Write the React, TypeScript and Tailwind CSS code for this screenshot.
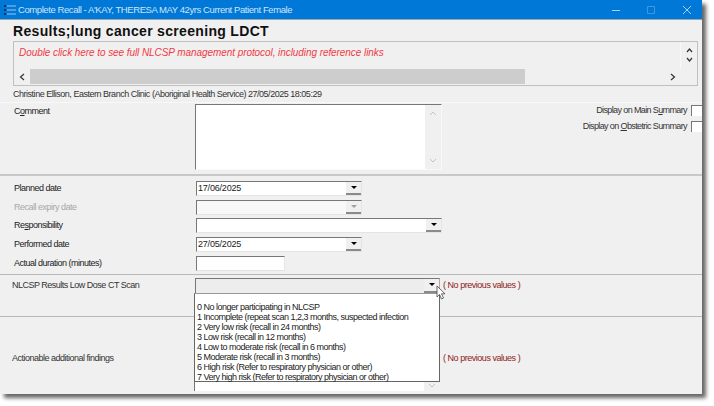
const labelFont = "font-['Liberation_Sans',sans-serif]";

function Arrow({ disabled }: { disabled?: boolean }) {
  return (
    <div className="flex h-full w-[15px] shrink-0 items-center justify-center border-b-2 border-[#8a8a8a] bg-[#f0f0f0]">
      <svg width="6" height="3" viewBox="0 0 6 3">
        <path d="M0 0h6L3 3z" fill={disabled ? "#a0a0a0" : "#000"} />
      </svg>
    </div>
  );
}

function FieldBox({
  value,
  arrow,
  disabled,
  width = "w-[166px]",
}: {
  value?: string;
  arrow?: boolean;
  disabled?: boolean;
  width?: string;
}) {
  return (
    <div
      className={`flex h-[15px] ${width} items-center border border-b-[#e4e4e4] border-l-[#777] border-r-[#e4e4e4] border-t-[#777] ${disabled ? "bg-[#f8f8f8]" : "bg-white"}`}
    >
      <div className="flex-1 pl-[1px] text-[9px] leading-none tracking-[-0.2px] text-[#222]">{value}</div>
      {arrow && <Arrow disabled={disabled} />}
    </div>
  );
}

function Row({
  label,
  muted,
  children,
}: {
  label: React.ReactNode;
  muted?: boolean;
  children: React.ReactNode;
}) {
  return (
    <div className="flex h-[15px] items-center">
      <div className={`w-[182px] text-[9px] leading-none tracking-[-0.5px] ${muted ? "text-[#a8a8a8]" : "text-[#222]"}`}>
        {label}
      </div>
      {children}
    </div>
  );
}

function Check({ label }: { label: React.ReactNode }) {
  return (
    <div className="flex h-[15px] items-center justify-end gap-[4px]">
      <span className="text-[9px] leading-none tracking-[-0.62px] text-[#333]">{label}</span>
      <div className="h-[11px] w-[11px] border-l border-t border-[#777] bg-white" />
    </div>
  );
}

const options = [
  "0 No longer participating in NLCSP",
  "1 Incomplete (repeat scan 1,2,3 months, suspected infection",
  "2 Very low risk (recall in 24 months)",
  "3 Low risk (recall in 12 months)",
  "4 Low to moderate risk (recall in 6 months)",
  "5 Moderate risk (recall in 3 months)",
  "6 High risk (Refer to respiratory physician or other)",
  "7 Very high risk (Refer to respiratory physician or other)",
];

export default function App() {
  return (
    <div className={`h-[406px] w-[714px] overflow-hidden bg-white ${labelFont}`}>
      <div className="relative flex h-[394px] w-[702px] flex-col bg-[#f0f0f0] shadow-[4px_4px_4px_#666]">
        {/* title bar */}
        <div className="flex h-[20px] shrink-0 items-center border-b border-[#9aa5ad] bg-[#0078d7] pl-[3px]">
          <svg width="13" height="12" viewBox="0 0 13 12" className="mr-[2px]">
            <path d="M1 2h2M1 6h2M1 10h2" stroke="#10203a" strokeWidth="1.5" />
            <path d="M4 2h9M4 6h9M4 10h9" stroke="#9cc4e8" strokeWidth="1" />
          </svg>
          <span className="flex-1 text-[9.5px] leading-none tracking-[-0.42px] text-[#cfe5f7]">
            Complete Recall - A'KAY, THERESA MAY 42yrs Current Patient Female
          </span>
          <svg width="80" height="12" viewBox="0 0 80 12" className="mr-[10px] text-[#a9d0ef]">
            <path d="M0 6.5h8" stroke="currentColor" />
            <path d="M35.5 2.5h7v7h-7z" stroke="#3f97dd" fill="none" />
            <path d="M71 2l8 8M79 2l-8 8" stroke="currentColor" />
          </svg>
        </div>

        {/* heading */}
        <div className="flex h-[21px] shrink-0 items-center pl-[13px] text-[14px] font-bold leading-none tracking-[0.32px] text-[#111]">
          Results;lung cancer screening LDCT
        </div>

        {/* protocol box */}
        <div className="ml-[13px] mr-[4px] flex h-[45px] shrink-0 flex-col border border-[#c0c0c0]">
          <div className="flex h-[27px] shrink-0">
            <div className="flex-1 pl-[5px] pt-[6px] text-[10px] italic leading-none tracking-[-0.07px] text-[#f03a44]">
              Double click here to see full NLCSP management protocol, including reference links
            </div>
            <div className="flex w-[17px] flex-col items-center gap-[4px] border-l border-[#f8f8f8] pt-[6px]">
              <svg width="7" height="5" viewBox="0 0 7 5">
                <path d="M1 4l2.5-3L6 4" stroke="#333" fill="none" strokeWidth="1.2" />
              </svg>
              <svg width="7" height="5" viewBox="0 0 7 5">
                <path d="M1 1l2.5 3L6 1" stroke="#333" fill="none" strokeWidth="1.2" />
              </svg>
            </div>
          </div>
          <div className="flex h-[15px] shrink-0 items-center">
            <div className="flex w-[16px] justify-center">
              <svg width="6" height="8" viewBox="0 0 6 8">
                <path d="M5 1L1.5 4 5 7" stroke="#333" fill="none" strokeWidth="1.2" />
              </svg>
            </div>
            <div className="h-full w-[495px] bg-[#cdcdcd]" />
            <div className="flex flex-1 justify-end pr-[21px]">
              <svg width="6" height="8" viewBox="0 0 6 8">
                <path d="M1 1l3.5 3L1 7" stroke="#333" fill="none" strokeWidth="1.2" />
              </svg>
            </div>
          </div>
        </div>

        {/* author line */}
        <div className="flex h-[16px] shrink-0 items-center pl-[13px] text-[9px] leading-none tracking-[-0.48px] text-[#333]">
          Christine Ellison, Eastern Branch Clinic (Aboriginal Health Service) 27/05/2025 18:05:29
        </div>

        {/* comment */}
        <div className="flex h-[74px] shrink-0 border-b-2 border-t border-b-[#c8c8c8] border-t-[#f8f8f8] pt-[1px]">
          <div className="w-[195px] pl-[14px] pt-[3px] text-[9px] leading-none tracking-[-0.5px] text-[#222]">
            C<span className="underline">o</span>mment
          </div>
          <div className="flex h-[66px] w-[247px] border border-b-[#f8f8f8] border-l-[#777] border-r-[#f8f8f8] border-t-[#777] bg-white">
            <div className="flex-1" />
            <div className="flex w-[16px] flex-col items-center justify-between bg-[#f0f0f0] py-[6px]">
              <svg width="8" height="5" viewBox="0 0 8 5">
                <path d="M1 4l3-3 3 3" stroke="#c4c4c4" fill="none" />
              </svg>
              <svg width="8" height="5" viewBox="0 0 8 5">
                <path d="M1 1l3 3 3-3" stroke="#c4c4c4" fill="none" />
              </svg>
            </div>
          </div>
          <div className="-mt-[1px] flex flex-1 flex-col gap-[1px]">
            <Check
              label={
                <>
                  Display on Main S<span className="underline">u</span>mmary
                </>
              }
            />
            <Check
              label={
                <>
                  Display on <span className="underline">O</span>bstetric Summary
                </>
              }
            />
          </div>
        </div>

        {/* dates */}
        <div className="flex h-[99px] shrink-0 flex-col gap-[3.7px] border-b border-[#b8b8b8] pl-[14px] pt-[5px]">
          <Row label="Planned date">
            <FieldBox value="17/06/2025" arrow />
          </Row>
          <Row label="Recall expiry date" muted>
            <FieldBox arrow disabled />
          </Row>
          <Row
            label={
              <>
                Re<span className="underline">s</span>ponsibility
              </>
            }
          >
            <FieldBox arrow width="w-[246px]" />
          </Row>
          <Row label="Performed date">
            <FieldBox value="27/05/2025" arrow />
          </Row>
          <Row label="Actual duration (minutes)">
            <FieldBox width="w-[89px]" />
          </Row>
        </div>

        {/* NLCSP results */}
        <div className="flex h-[42px] shrink-0 border-b border-[#b8b8b8] pl-[12px] pt-[3px]">
          <div className="flex h-[15px] items-center">
            <div className="w-[183px] text-[9px] leading-none tracking-[-0.5px] text-[#333]">NLCSP Results Low Dose CT Scan</div>
            <div className="flex h-[16px] w-[245px] items-center border border-l-[#777] border-t-[#777] border-b-[#777] border-r-[#aaa] bg-[#ededed]">
              <div className="flex-1" />
              <Arrow />
            </div>
            <span className="ml-[3px] text-[9px] leading-none tracking-[-0.47px] text-[#8f2020]">( No previous values )</span>
          </div>
        </div>

        {/* findings */}
        <div className="flex flex-1 items-center pl-[12px] pt-[6px]">
          <div className="w-[431px] text-[9px] leading-none tracking-[-0.5px] text-[#333]">Actionable additional findings</div>
          <span className="text-[9px] leading-none tracking-[-0.47px] text-[#8f2020]">( No previous values )</span>
        </div>

        {/* field under the open list */}
        <div className="absolute left-[194px] top-[381px] flex h-[10px] w-[246px] border-l border-[#777] bg-white">
          <div className="flex-1" />
          <div className="flex w-[16px] items-end justify-center bg-[#f0f0f0] pb-[3px]">
            <svg width="8" height="5" viewBox="0 0 8 5">
              <path d="M1 1l3 3 3-3" stroke="#c4c4c4" fill="none" />
            </svg>
          </div>
        </div>

        {/* open dropdown list */}
        <div className="absolute left-[194px] top-[293px] h-[89px] w-[246px] border border-[#666] border-t-[#999] bg-white pl-[2px] pt-[8px]">
          {options.map((o) => (
            <div key={o} className="h-[10px] whitespace-nowrap text-[9px] leading-[10px] tracking-[-0.5px] text-[#222]">
              {o}
            </div>
          ))}
        </div>

        {/* mouse pointer */}
        <svg width="10" height="15" viewBox="0 0 10 15" className="absolute left-[436px] top-[285px]">
          <path d="M1 1v11l2.5-2.5L5.500 14l2-1-2-4.200H9z" fill="#fff" stroke="#444" strokeWidth="0.8" />
        </svg>
      </div>
    </div>
  );
}
